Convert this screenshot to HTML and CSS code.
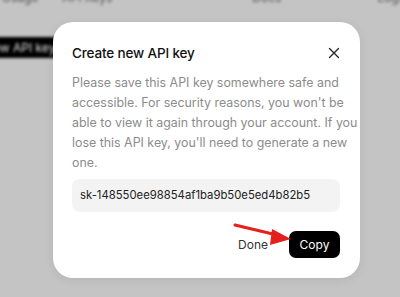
FILE: index.html
```html
<!DOCTYPE html>
<html>
<head>
<meta charset="utf-8">
<link rel="stylesheet" href="styles.css">
</head>
<body>
<div class="page">
  <div class="bg">
    <div class="topnav">
      <span class="nav-item n1">Usage</span>
      <span class="nav-item n2">API Keys</span>
      <span class="nav-item n3">Docs</span>
      <span class="nav-item n4">Logs</span>
    </div>
    <div class="newkey">New API key</div>
  </div>
  <div class="overlay">
    <div class="modal">
      <div class="modal-head">
        <h1 class="title">Create new API key</h1>
        <svg class="close" width="12" height="12" viewBox="0 0 12 12"><path d="M1.5 1.5 L10.5 10.5 M10.5 1.5 L1.5 10.5" stroke="#222" stroke-width="1.3" stroke-linecap="round"/></svg>
      </div>
      <p class="desc">Please save this API key somewhere safe and accessible. For security reasons, you won't be able to view it again through your account. If you lose this API key, you'll need to generate a new one.</p>
      <div class="keybox">sk-148550ee98854af1ba9b50e5ed4b82b5</div>
      <div class="actions">
        <span class="done">Done</span>
        <span class="copy">Copy</span>
      </div>
    </div>
  </div>
  <svg class="arrow" width="65" height="30" viewBox="0 0 65 30">
    <path d="M5 5 L47 15" stroke="#e5201c" stroke-width="3" stroke-linecap="round"/>
    <path d="M61 19 L42 9 L40 25 Z" fill="#e5201c"/>
  </svg>
</div>
</body>
</html>
```
FILE: styles.css
```css
* { box-sizing: border-box; }
html, body { margin: 0; padding: 0; }
body { font-family: Inter, "Noto Sans", sans-serif; background: #c3c3c3; }
.page { position: relative; width: 400px; height: 297px; overflow: hidden; background: #c4c4c4; }
.bg { filter: blur(1.4px); }
.topnav { display: flex; height: 4px; font-size: 12px; color: #555; white-space: nowrap; }
.nav-item { display: block; line-height: 12px; margin-top: -8px; }
.n1 { margin-left: 2px; }
.n2 { margin-left: 24px; }
.n3 { margin-left: 140px; }
.n4 { margin-left: 96px; }
.newkey { margin-top: 33px; width: 100px; height: 21px; margin-left: -28px; background: #000; color: #ddd; font-size: 12px; line-height: 21px; padding-left: 12px; border-radius: 4px; white-space: nowrap; }
.overlay { position: absolute; inset: 0; padding: 22px 0 0 53px; }
.modal { width: 307px; height: 256px; background: #fff; border-radius: 20px; padding: 21px 20px 0 19px; box-shadow: 0 2px 10px rgba(0,0,0,0.08); }
.modal-head { display: flex; align-items: center; justify-content: space-between; height: 20px; }
.title { margin: 0; font-size: 13.5px; letter-spacing: -0.15px; font-weight: 500; color: #111; }
.close { margin-right: 0; }
.desc { margin: 10px -22px 0 0; font-size: 12.4px; line-height: 20px; color: #8c8c8c; }
.keybox { margin-top: 6px; height: 33px; background: #f3f3f3; border-radius: 8px; font-size: 11.3px; color: #222; padding-left: 8px; line-height: 33px; }
.actions { display: flex; justify-content: flex-end; align-items: center; margin-top: 19px; gap: 21px; }
.done { font-size: 12px; color: #333; }
.copy { background: #000; color: #fff; font-size: 12px; border-radius: 7px; width: 51px; height: 27px; line-height: 27px; text-align: center; }
.arrow { position: absolute; left: 230px; top: 220px; }
```
